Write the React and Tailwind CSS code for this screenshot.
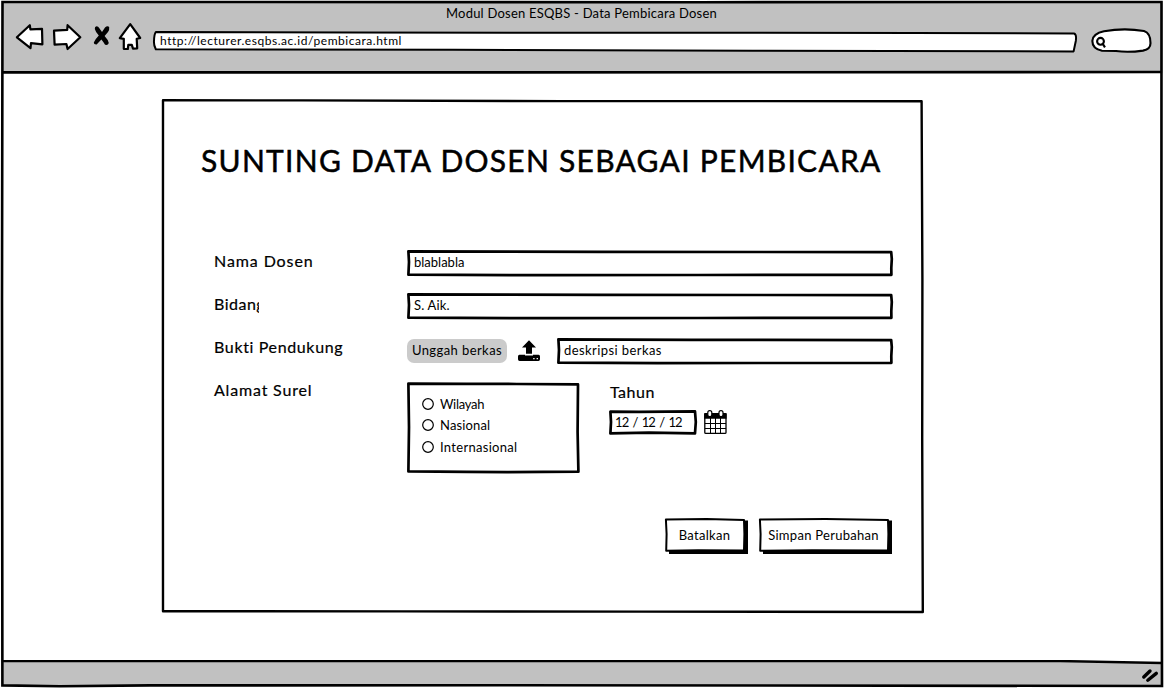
import React from "react";

/* Hand-drawn outline laid behind the content of a box. */
function Sketch({ w, h, d, fill = "#fff", sw = 2.7, children }) {
  return (
    <svg
      className="pointer-events-none absolute inset-0 overflow-visible"
      width={w}
      height={h}
      viewBox={`0 0 ${w} ${h}`}
      aria-hidden="true"
    >
      {children}
      <path d={d} fill={fill} stroke="#000" strokeWidth={sw} strokeLinejoin="round" />
    </svg>
  );
}

function Field({ w, className, children }) {
  return (
    <div className={`relative flex h-[27px] items-center pl-[7px] text-[13px] ${className}`}>
      <Sketch
        w={w}
        h={27}
        d={`M1.4 1.4 L${w * 0.4} 1.9 L${w - 1.8} 2.1 L${w - 1.2} 9 L${w - 1.7} 18 L${w - 1.6} 24.8 L${w * 0.6} 25 L${w * 0.3} 25.2 L1.4 24.7 L2 12 Z`}
      />
      <span className="relative -mt-[2px] whitespace-nowrap">{children}</span>
    </div>
  );
}

function Label({ className = "", children }) {
  return (
    <div className={`w-[193px] shrink-0 whitespace-nowrap text-[16px] leading-[24px] [-webkit-text-stroke:0.2px_#000] ${className}`}>
      {children}
    </div>
  );
}

function Button({ w, className, children }) {
  return (
    <button className={`relative flex h-[36px] items-center justify-center text-[13px] tracking-[0.28px] ${className}`}>
      <Sketch
        w={w}
        h={36}
        sw={2}
        d={`M0.9 1.5 L${w * 0.5} 1.1 L${w - 4} 2 L${w - 3.6} 16 L${w - 4} 32.4 L${w * 0.4} 32.2 L1.2 32.8 L1.6 16 Z`}
      >
        <path d={`M4 31 H${w - 5} V2.4 H${w} V36 H4 Z`} />
      </Sketch>
      <span className="relative pr-[4px] whitespace-nowrap">{children}</span>
    </button>
  );
}

function Radio({ className = "", tracking, children }) {
  return (
    <label className={`relative flex h-[20px] items-center ${className}`}>
      <svg width="12" height="12" viewBox="0 0 12 12" className="mr-[6px] shrink-0">
        <circle cx="6" cy="6" r="5.3" fill="#fff" stroke="#000" strokeWidth="1.2" />
      </svg>
      <span className={`relative mt-[2px] whitespace-nowrap text-[13px] ${tracking}`}>{children}</span>
    </label>
  );
}

function Header() {
  return (
    <header className="relative h-[73px] shrink-0 bg-[#c1c1c1]">
      <div className="flex h-[27px] items-center justify-center text-[13px] tracking-[0.22px]">
        <span className="-ml-[1px]">Modul Dosen ESQBS - Data Pembicara Dosen</span>
      </div>
      <div className="flex">
        <svg className="overflow-visible" width="153" height="30" viewBox="0 27 153 30" fill="#fff" stroke="#000" strokeWidth="2.2" strokeLinejoin="round">
          <path d="M16.9 37.3 L29.8 25.2 L30.4 29.3 L42 28.8 L42.4 44.4 L31 43.2 L30.5 48.2 Z" />
          <path d="M54 30.6 L67.2 29.8 L67.6 25.2 L80.3 37.3 L67.6 49 L66.4 44 L54.6 44.6 Z" />
          <path d="M119.8 38.2 L130.2 24.2 L140.2 38 L136.7 38.8 L137.2 48.4 L133 48.6 L131.8 44.8 L128.3 44.8 L127.8 49 L123.8 48.8 L123.8 38.8 Z" />
          <path d="M94.8 29 Q94.6 26.4 96.6 26.2 Q98.4 26.4 99 27.8 L102 32 L105 27.6 Q107.4 25.4 109.2 27 Q109.6 30 108 32 L104.6 36 Q108 39.6 108.8 43 Q108 45.4 105.8 45 Q104.4 44.4 104 43 L101.4 39.6 Q98.6 42.6 96.6 44.4 Q93.8 44.6 93.8 42.4 Q95.6 38.6 98.8 35.4 Q95.4 31.8 94.8 29 Z" fill="#000" stroke="none" />
        </svg>
        <div className="relative mt-[4px] flex h-[21px] w-[924px] items-center pl-[7px] text-[12px]">
          <Sketch w={924} h={21} sw={2} d="M2.8 1 L200 1.6 L560 1.8 L760 2 L921 2.4 Q923.8 3 922.8 10 L920.6 20.4 L600 19.8 L300 18.8 L2.8 18.2 Q0.6 14 1 10 Q1.2 3 2.8 1 Z" />
          <span className="relative -mt-[1px] tracking-[0.54px]">http://lecturer.esqbs.ac.id/pembicara.html</span>
        </div>
        <svg className="ml-[14px] mt-[1px]" width="62" height="28" viewBox="1091 28 62 28" fill="#fff" stroke="#000" strokeWidth="2.1">
          <path d="M1104 31.3 Q1124 27.6 1144 31 Q1150.5 33 1150.5 43 Q1150.6 49 1143 50.6 Q1128 52.8 1116 51 L1102 50.8 Q1092 48.6 1092.4 40.6 Q1093 33.6 1104 31.3 Z" />
          <circle cx="1100.5" cy="41.3" r="3.4" />
          <path d="M1102.6 43.6 L1105 47.4" />
        </svg>
      </div>
    </header>
  );
}

function UploadIcon() {
  return (
    <svg className="ml-[11px] mt-[2px]" width="22" height="21" viewBox="0 0 22 21">
      <path d="M11 0.2 L18 7.4 H14 V13.8 H8 V7.4 H4 Z" />
      <path fillRule="evenodd" d="M1.4 14.8 H7 V15.6 H15 V14.8 H20.6 Q22 14.8 22 16.4 V19.2 Q22 20.9 20.4 20.9 H1.6 Q0 20.9 0 19.2 V16.4 Q0 14.8 1.4 14.8 Z M15.2 18 V19.2 H16.6 V18 Z M18.6 18 V19.2 H20 V18 Z" />
    </svg>
  );
}

function CalendarIcon() {
  return (
    <svg className="ml-[7px]" width="23" height="25" viewBox="0 0 23 25">
      <path d="M0.8 4 H22 V22.4 Q22 23.4 21 23.4 H1.8 Q0.8 23.4 0.8 22.4 Z" fill="#fff" stroke="#000" strokeWidth="1.3" />
      <path d="M0.2 4.4 Q0.2 3 1.6 3 H21.2 Q22.6 3 22.6 4.4 V8.8 H0.2 Z" />
      <path d="M1 13.5 H22 M1 18.5 H22 M6.5 8 V23 M11.5 8 V23 M16.5 8 V23" stroke="#000" strokeWidth="1" />
      <rect x="3.8" y="0.7" width="4" height="6" rx="1.9" fill="#fff" stroke="#000" strokeWidth="1.2" />
      <rect x="15" y="0.7" width="4" height="6" rx="1.9" fill="#fff" stroke="#000" strokeWidth="1.2" />
    </svg>
  );
}

export default function App() {
  return (
    <div className="relative flex h-[688px] w-[1164px] flex-col overflow-hidden bg-white font-['Lato',sans-serif] text-black">
      <Header />

      <main className="flex-1">
        <section className="relative ml-[162px] mt-[26px] flex h-[514px] w-[762px] flex-col">
          <Sketch w={762} h={514} sw={2.4} d="M1 1.3 L140 1.4 L400 2.1 L759.6 2.2 L760.4 180 L760.2 340 L760.8 513 L480 512.6 L240 512.4 L1 512.2 L0.9 300 Z" />
          <h1 className="relative mt-[43px] ml-[39px] h-[36px] whitespace-nowrap text-[30px] leading-[36px] tracking-[1.27px] [-webkit-text-stroke:0.5px_#000]">
            SUNTING DATA DOSEN SEBAGAI PEMBICARA
          </h1>

          <form className="relative mt-[72px] ml-[52px] flex flex-col">
            <div className="flex">
              <Label className="-mt-[1px] tracking-[0.9px]">Nama Dosen</Label>
              <Field w={486} className="w-[486px]">blablabla</Field>
            </div>
            <div className="mt-[16px] flex">
              <Label className="-mt-[1px] tracking-[0.5px]">
                <span className="block w-[45px] overflow-hidden">Bidang</span>
              </Label>
              <Field w={486} className="w-[486px] tracking-[0.15px]">S. Aik.</Field>
            </div>
            <div className="mt-[18px] flex">
              <Label className="-mt-[3px] tracking-[0.64px]">Bukti Pendukung</Label>
              <div className="mt-[1px] flex h-[24px] w-[100px] items-center justify-center rounded-[7px] bg-[#cbcbcb] text-[13px] tracking-[0.42px]">
                Unggah berkas
              </div>
              <UploadIcon />
              <Field w={336} className="ml-[17px] w-[336px] tracking-[0.42px]">deskripsi berkas</Field>
            </div>
            <div className="mt-[17px] flex">
              <Label className="-mt-[4px] tracking-[0.82px]">Alamat Surel</Label>
              <div className="relative h-[91px] w-[173px] pt-[12px] pl-[15px]">
                <Sketch w={173} h={91} d="M1.4 1.6 L60 1.8 L110 2 L171 2.4 L170.6 50 L171.4 89.6 L100 90.2 L60 89.8 L1.4 89.4 L2 45 Z" />
                <Radio tracking="tracking-[-0.3px]">Wilayah</Radio>
                <Radio className="mt-[1px]" tracking="tracking-[0.15px]">Nasional</Radio>
                <Radio className="mt-[2px]" tracking="tracking-[0.3px]">Internasional</Radio>
              </div>
              <div className="ml-[29px]">
                <div className="-mt-[2px] ml-[1px] h-[24px] text-[16px] leading-[24px] tracking-[0.5px] [-webkit-text-stroke:0.2px_#000]">Tahun</div>
                <div className="mt-[6px] flex">
                  <div className="relative flex h-[25px] w-[88px] items-center pl-[6px] text-[13px]">
                    <Sketch w={88} h={25} d="M1.4 1.6 L30 1.8 L86 1.4 L86.8 12 L86 23.4 L40 22.6 L1.4 23.4 L2 12 Z" />
                    <span className="relative mt-[1px] whitespace-nowrap tracking-[-0.9px] [word-spacing:1.8px]">12 / 12 / 12</span>
                  </div>
                  <CalendarIcon />
                </div>
              </div>
            </div>
          </form>

          <div className="relative mt-[45px] mr-[32px] flex justify-end gap-[11px]">
            <Button w={83} className="w-[83px]">Batalkan</Button>
            <Button w={133} className="w-[133px]">Simpan Perubahan</Button>
          </div>
        </section>
      </main>

      <footer className="flex h-[28px] shrink-0 items-end justify-end">
        <svg className="block" width="1164" height="28" viewBox="0 660 1164 28">
          <path d="M3 660.6 L900 660.2 L1050 660.2 L1162 662.8 V686 H3 Z" fill="#c1c1c1" />
          <path d="M3 661 L400 661 L1060 661 L1162 663" fill="none" stroke="#000" strokeWidth="2.4" />
          <path d="M1143.8 677 L1150 671 M1147.8 680.3 L1156.3 673.4" stroke="#000" strokeWidth="3.4" strokeLinecap="round" />
        </svg>
      </footer>

      {/* Window frame, drawn over the bars */}
      <svg className="pointer-events-none absolute inset-0" width="1164" height="688" fill="none" stroke="#000" aria-hidden="true">
        <path d="M0 0 H1164 V688 H0 Z M2 2 V686.5 H1162.5 V2 Z" fill="#fff" fillRule="evenodd" stroke="none" />
        <path d="M2.5 2 L700 2.2 L1161.5 2 L1161.4 300 L1162 686 L500 685.2 L150 685.4 L60 686.2 L2.4 685.4 L2 300 Z" strokeWidth="2.6" />
        <path d="M2 72.4 L500 72.4 L1162 72" strokeWidth="2.6" />
      </svg>
    </div>
  );
}
